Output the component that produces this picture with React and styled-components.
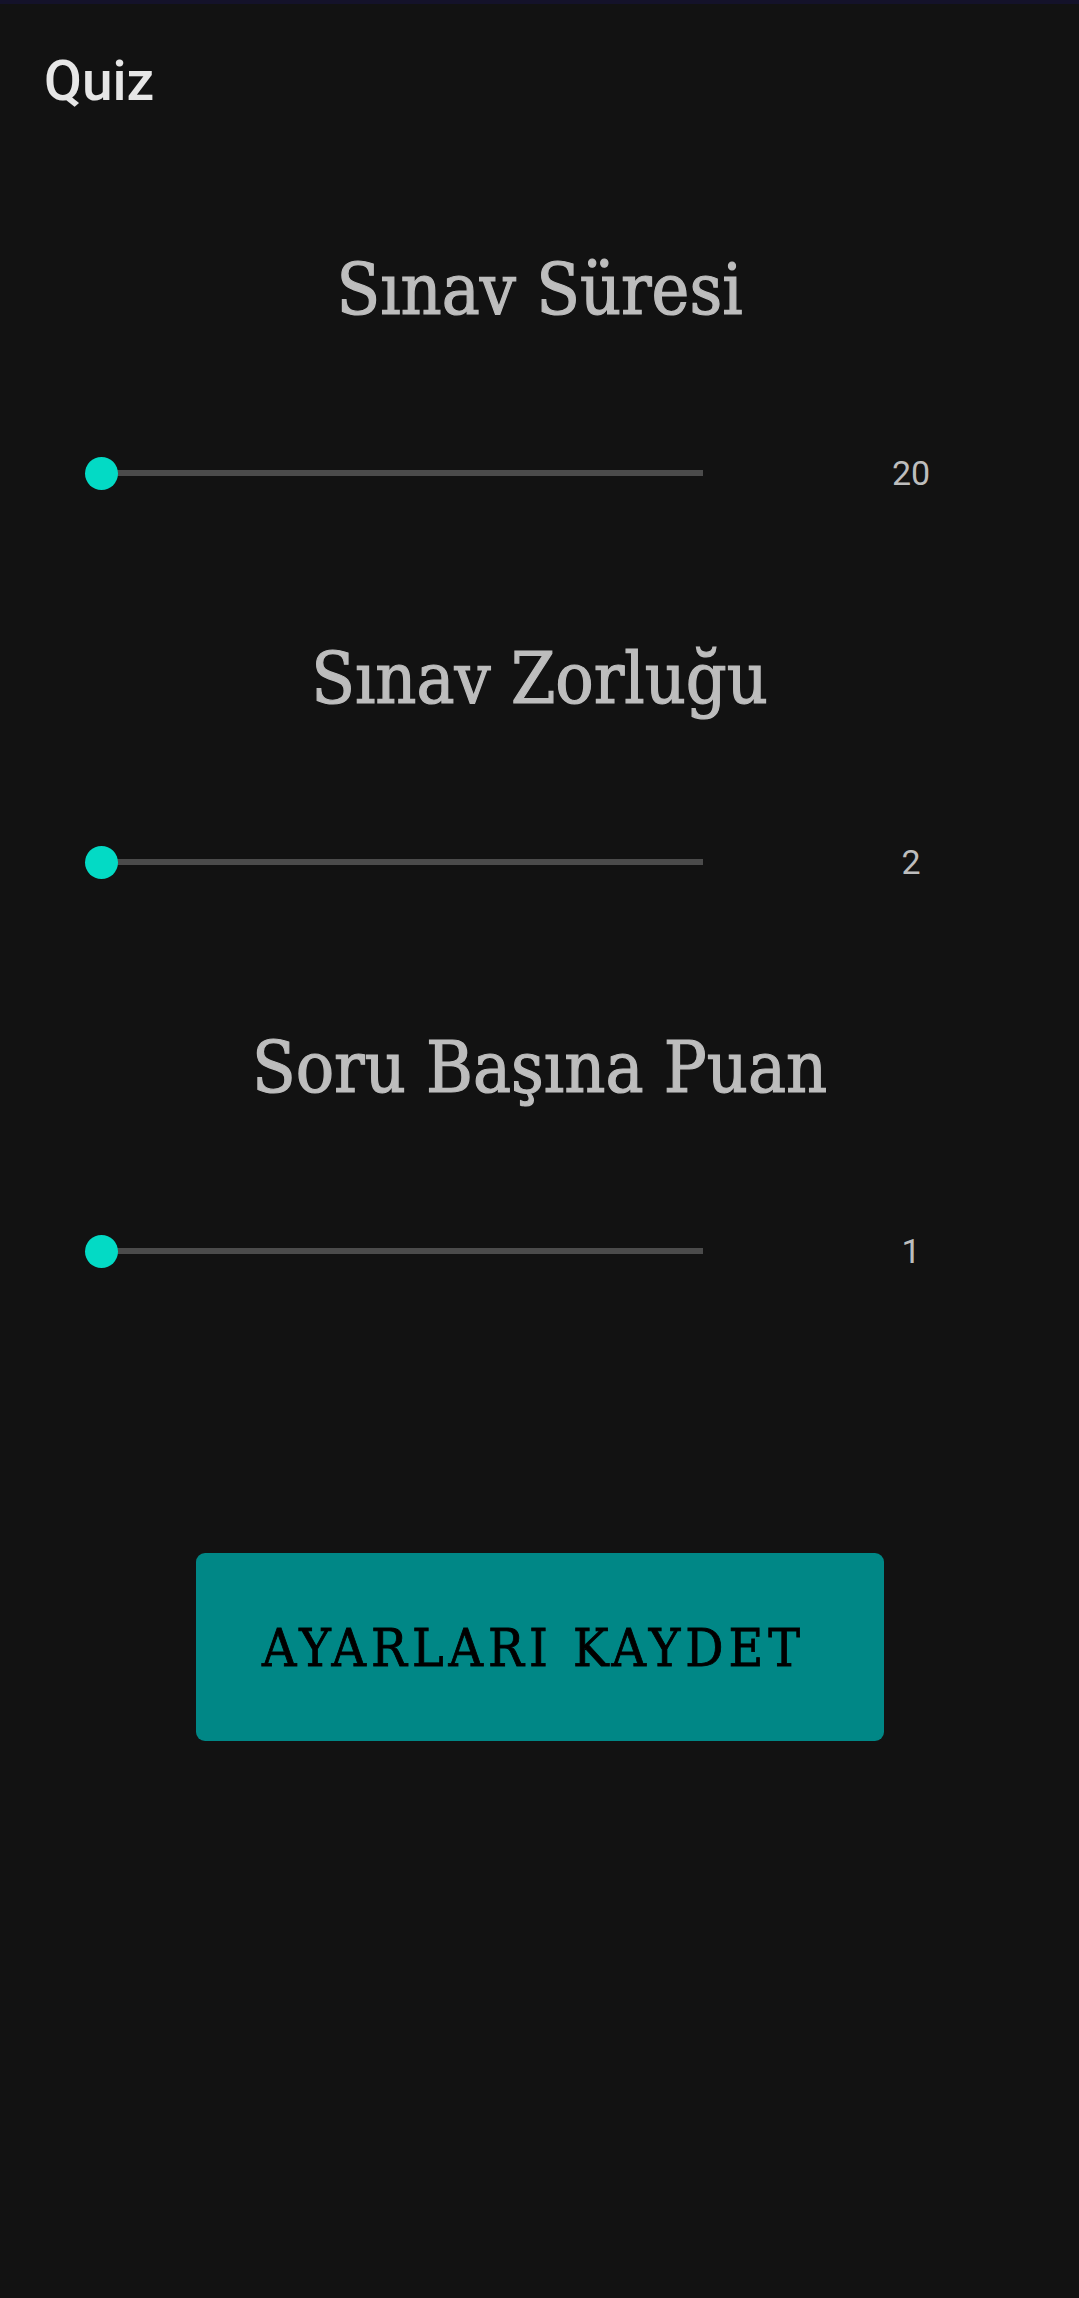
import React from "react";
import styled, { createGlobalStyle } from "styled-components";

const Global = createGlobalStyle`
  html, body { margin: 0; padding: 0; background: #121212; }
  body { font-family: Roboto, "Noto Sans", sans-serif; }
`;

const Screen = styled.div`
  width: 1079px;
  min-height: 2298px;
  background: #121212;
  display: flex;
  flex-direction: column;
`;

const StatusStrip = styled.div`
  height: 4px;
  background: #14122a;
`;

const AppBar = styled.header`
  height: 154px;
  display: flex;
  align-items: center;
  padding-left: 44px;
`;

const Title = styled.h1`
  margin: 0;
  font-family: Roboto, sans-serif;
  font-weight: 500;
  font-size: 55px;
  color: #e6e6e6;
`;

const Content = styled.main`
  display: flex;
  flex-direction: column;
  padding-top: 82px;
  gap: 126px;
`;

const Section = styled.section`
  display: flex;
  flex-direction: column;
  gap: 103px;
`;

const Heading = styled.h2`
  margin: 0;
  height: 100px;
  line-height: 100px;
  text-align: center;
  font-family: "DejaVu Serif Condensed", "DejaVu Serif", serif;
  font-stretch: condensed;
  font-weight: normal;
  font-size: 71px;
  color: #bdbdbd;
  -webkit-text-stroke: 1.2px #bdbdbd;
`;

const SliderRow = styled.div`
  height: 60px;
  display: flex;
  align-items: center;
  padding: 0 48px 0 85px;
`;

const SliderBox = styled.div`
  position: relative;
  flex: 0 0 634px;
  height: 33px;
  display: flex;
  align-items: center;
  padding: 0 16.5px;
  box-sizing: border-box;
`;

const Track = styled.div`
  flex: 1;
  height: 6px;
  background: #4b4b4b;
`;

const Thumb = styled.div`
  position: absolute;
  top: 0;
  width: 33px;
  height: 33px;
  border-radius: 50%;
  background: #03dac5;
`;

const Value = styled.span`
  margin-left: auto;
  width: 240px;
  text-align: center;
  font-family: Roboto, sans-serif;
  font-size: 34px;
  color: #bdbdbd;
`;

const ButtonWrap = styled.div`
  display: flex;
  justify-content: center;
  padding-top: 272px;
`;

const SaveButton = styled.button`
  width: 688px;
  height: 188px;
  border: none;
  border-radius: 9px;
  background: #008786;
  color: #000;
  font-family: "DejaVu Serif Condensed", "DejaVu Serif", serif;
  font-stretch: condensed;
  font-size: 53px;
  letter-spacing: 5px;
  -webkit-text-stroke: 0.8px #000;
  padding: 0 12px 0 0;
  display: flex;
  align-items: center;
  justify-content: center;
`;

const settings = [
  { label: "Sınav Süresi", value: 20, pct: 0 },
  { label: "Sınav Zorluğu", value: 2, pct: 0 },
  { label: "Soru Başına Puan", value: 1, pct: 0 },
];

function Slider({ pct }) {
  return (
    <SliderBox>
      <Track />
      <Thumb style={{ left: `${pct * (634 - 33)}px` }} />
    </SliderBox>
  );
}

export default function App() {
  return (
    <>
      <Global />
      <Screen>
        <StatusStrip />
        <AppBar>
          <Title>Quiz</Title>
        </AppBar>
        <Content>
          {settings.map((s) => (
            <Section key={s.label}>
              <Heading>{s.label}</Heading>
              <SliderRow>
                <Slider pct={s.pct} />
                <Value>{s.value}</Value>
              </SliderRow>
            </Section>
          ))}
        </Content>
        <ButtonWrap>
          <SaveButton>AYARLARI KAYDET</SaveButton>
        </ButtonWrap>
      </Screen>
    </>
  );
}
